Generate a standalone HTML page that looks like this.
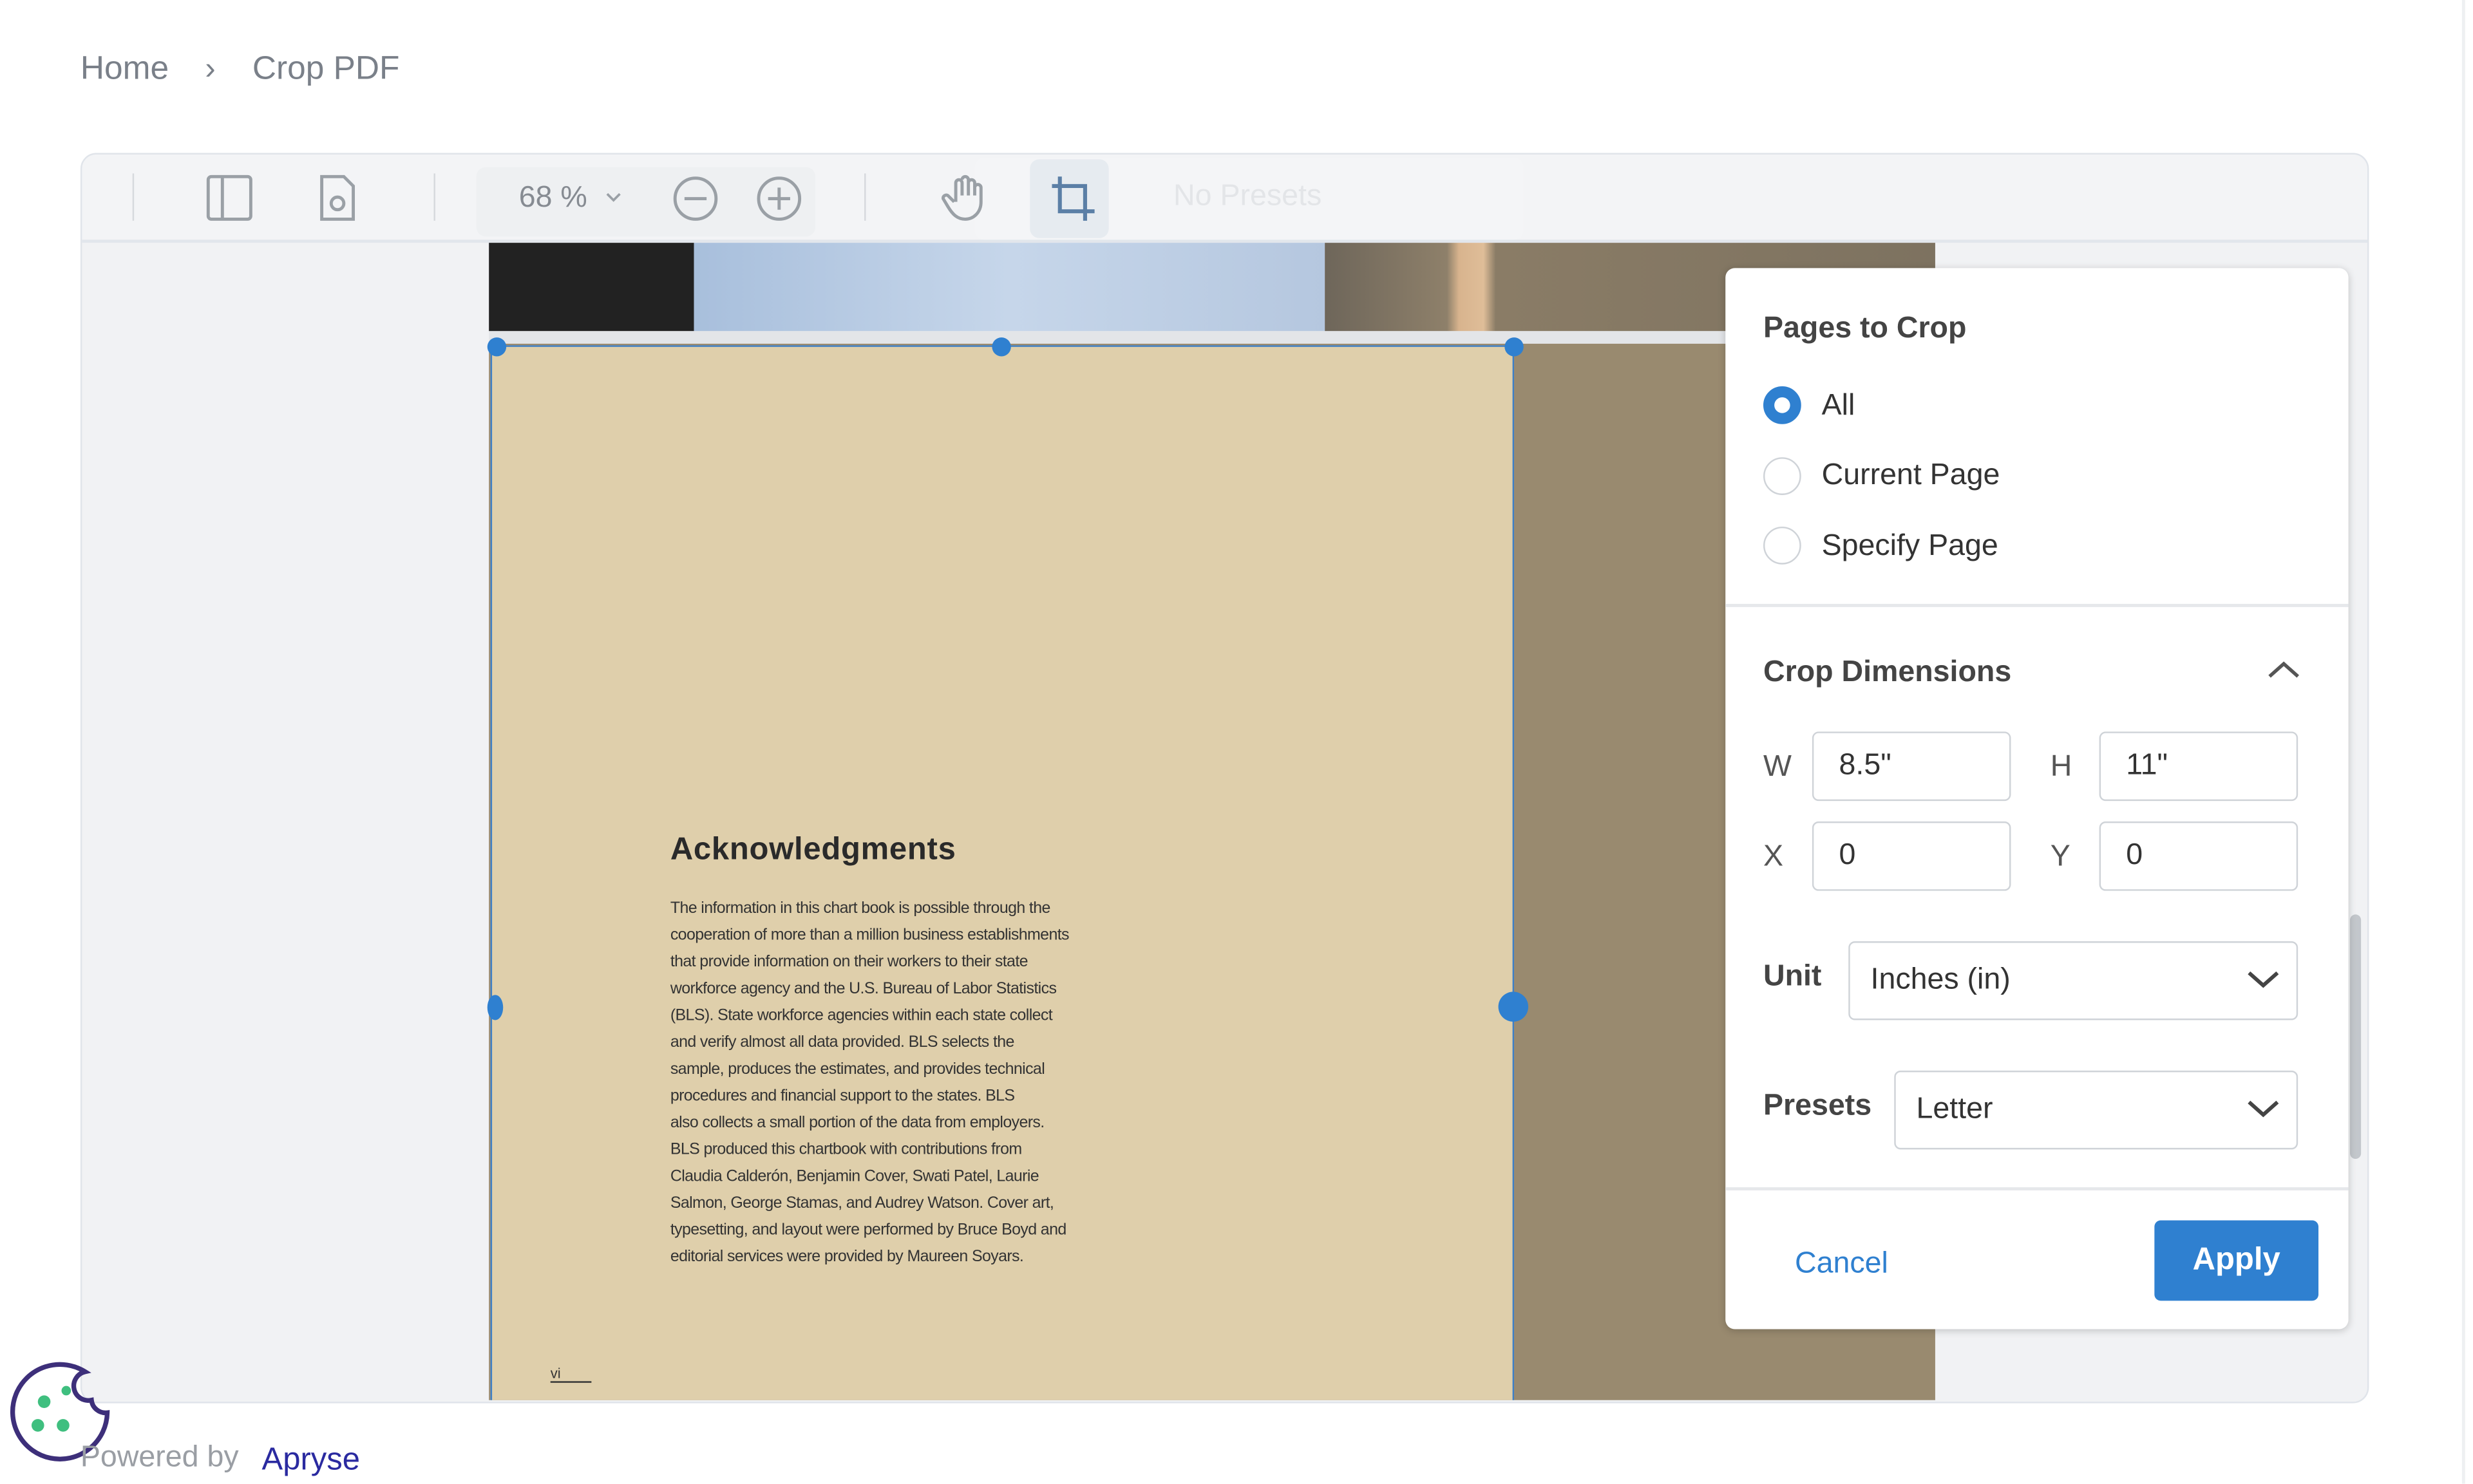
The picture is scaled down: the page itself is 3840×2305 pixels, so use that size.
<!DOCTYPE html>
<html><head><meta charset="utf-8"><style>
*{box-sizing:border-box;margin:0;padding:0}
body{width:3840px;height:2303px;overflow:hidden;background:#fff;font-family:"Liberation Sans",sans-serif}
#w{position:absolute;left:0;top:0;width:1568px;height:941px;transform:scale(2.449);transform-origin:0 0}
.a{position:absolute}
.t{color:#333;font-size:19px}
.inp{position:absolute;border:1px solid #cfd3d8;border-radius:4px;background:#fff;font-size:19px;color:#333;padding-left:16px;display:flex;align-items:center}
.rad{position:absolute;width:24px;height:24px;border-radius:50%;border:1.5px solid #cfd3d8;background:#fff}
.pl{position:absolute;left:425px;font-size:10.2px;letter-spacing:-0.25px;color:#333;font-family:"Liberation Sans Narrow","Liberation Sans",sans-serif;white-space:nowrap}
.h{position:absolute;width:12px;height:12px;border-radius:50%;background:#2f80d0}
</style></head><body><div id="w">
<div class="a" style="left:51px;top:32px;font-size:21px;color:#7a8089">Home</div>
<div class="a" style="left:130px;top:33px;font-size:20px;color:#7a8089">›</div>
<div class="a" style="left:160px;top:32px;font-size:21px;color:#7a8089">Crop PDF</div>

<div class="a" style="left:51px;top:97px;width:1451px;height:793px;border:1px solid #e0e4ea;border-radius:10px;background:#f1f2f4;overflow:hidden">
 <div class="a" style="left:0;top:0;width:1451px;height:56px;background:#f3f4f6;border-bottom:2px solid #e2e6ec"></div>
 <div class="a" style="left:32px;top:12px;width:1px;height:30px;background:#d6d9dd"></div>
 <div class="a" style="left:223px;top:12px;width:1px;height:30px;background:#d6d9dd"></div>
 <div class="a" style="left:496px;top:12px;width:1px;height:30px;background:#d6d9dd"></div>
 <div class="a" style="left:250px;top:8px;width:215px;height:44px;background:#eef0f2;border-radius:6px"></div>
 <div class="a" style="left:566px;top:2px;width:348px;height:52px;background:#f4f5f7;border-radius:6px"></div>
 <div class="a" style="left:601px;top:3px;width:50px;height:50px;background:#e6ebf0;border-radius:6px"></div>
 <svg class="a" style="left:70px;top:0" width="600" height="56" fill="none" stroke="#9aa0a6" stroke-width="2">
  <rect x="10" y="14" width="27" height="27" rx="2"/><line x1="19" y1="14" x2="19" y2="41"/>
  <path d="M82 14h14l6 6v21h-20z"/><circle cx="92" cy="31" r="4"/>
  <path d="M271 25l-4 4l-4-4" stroke-width="1.5"/>
  <circle cx="319" cy="28" r="13"/><line x1="312" y1="28" x2="326" y2="28"/>
  <circle cx="372" cy="28" r="13"/><line x1="365" y1="28" x2="379" y2="28"/><line x1="372" y1="21" x2="372" y2="35"/>
  <path d="M484 30v-12a2 2 0 0 1 4 0v8m0-10a2 2 0 0 1 4 0v10m0-8a2 2 0 0 1 4 0v8m0-5a2 2 0 0 1 4 0v9c0 7-5 11-10 11s-8-3-11-8l-3-5a2 2 0 0 1 3-2l4 4"/>
  <path d="M550 14v22h22M545 20h21v22" stroke="#5b7fa6" stroke-width="2.5"/>
 </svg>
 <div class="a" style="left:277px;top:17px;font-size:19px;color:#868b92">68 %</div>
 <div class="a" style="left:692px;top:16px;font-size:19px;color:#e3e5e8">No Presets</div>
</div>

<!-- page -->
<div class="a" style="left:310px;top:154px;width:130px;height:56px;background:#222"></div>
<div class="a" style="left:440px;top:154px;width:400px;height:56px;background:linear-gradient(90deg,#a8bfdc,#c6d6ea 50%,#b5c7df)"></div>
<div class="a" style="left:840px;top:154px;width:387px;height:56px;background:linear-gradient(90deg,#6e665a,#8e806a 20%,#d8b48e 22%,#dfbd98 26%,#8a7c66 28%,#7d7260)"></div>
<div class="a" style="left:310px;top:210px;width:917px;height:8px;background:#e3e5e8"></div>
<div class="a" style="left:310px;top:218px;width:917px;height:670px;background:#998a6f"></div>
<div class="a" style="left:311px;top:219px;width:649px;height:669px;background:#dfcfab;border:1.5px solid #3f7fc5;border-bottom:none"></div>
<div class="h" style="left:309px;top:214px"></div><div class="h" style="left:629px;top:214px"></div><div class="h" style="left:954px;top:214px"></div>
<div class="h" style="left:309px;top:631px;width:10px;height:16px"></div><div class="h" style="left:950px;top:629px;width:19px;height:19px"></div>
<div class="a" style="left:425px;top:528px;font-size:20px;font-weight:bold;color:#2a2a2a;letter-spacing:0.3px">Acknowledgments</div>
<div class="pl" style="top:571px">The information in this chart book is possible through the</div>
<div class="pl" style="top:588px">cooperation of more than a million business establishments</div>
<div class="pl" style="top:605px">that provide information on their workers to their state</div>
<div class="pl" style="top:622px">workforce agency and the U.S. Bureau of Labor Statistics</div>
<div class="pl" style="top:639px">(BLS). State workforce agencies within each state collect</div>
<div class="pl" style="top:656px">and verify almost all data provided. BLS selects the</div>
<div class="pl" style="top:673px">sample, produces the estimates, and provides technical</div>
<div class="pl" style="top:690px">procedures and financial support to the states. BLS</div>
<div class="pl" style="top:707px">also collects a small portion of the data from employers.</div>
<div class="pl" style="top:724px">BLS produced this chartbook with contributions from</div>
<div class="pl" style="top:741px">Claudia Calderón, Benjamin Cover, Swati Patel, Laurie</div>
<div class="pl" style="top:758px">Salmon, George Stamas, and Audrey Watson. Cover art,</div>
<div class="pl" style="top:775px">typesetting, and layout were performed by Bruce Boyd and</div>
<div class="pl" style="top:792px">editorial services were provided by Maureen Soyars.</div>
<div class="a" style="left:349px;top:866px;font-size:9px;color:#333;border-bottom:1px solid #333;width:26px">vi</div>
<div class="a" style="left:1490px;top:580px;width:7px;height:155px;background:#c3c7cc;border-radius:4px"></div>

<!-- panel -->
<div class="a" style="left:1094px;top:170px;width:395px;height:673px;background:#fff;border-radius:6px;box-shadow:0 1px 5px rgba(0,0,0,.2)">
 <div class="a t" style="left:24px;top:28px;font-weight:bold;color:#444">Pages to Crop</div>
 <div class="rad" style="left:24px;top:75px;border:7px solid #2f80d0"></div>
 <div class="a t" style="left:61px;top:77px">All</div>
 <div class="rad" style="left:24px;top:120px"></div>
 <div class="a t" style="left:61px;top:121px">Current Page</div>
 <div class="rad" style="left:24px;top:164px"></div>
 <div class="a t" style="left:61px;top:166px">Specify Page</div>
 <div class="a" style="left:0;top:213px;width:395px;height:2px;background:#e6e8eb"></div>
 <div class="a t" style="left:24px;top:246px;font-weight:bold;color:#444">Crop Dimensions</div>
 <svg class="a" style="left:343px;top:248px" width="22" height="14" fill="none" stroke="#555" stroke-width="2.2"><path d="M2 11l9-8l9 8"/></svg>
 <div class="a t" style="left:24px;top:306px;color:#555">W</div>
 <div class="inp" style="left:55px;top:294px;width:126px;height:44px">8.5"</div>
 <div class="a t" style="left:206px;top:306px;color:#555">H</div>
 <div class="inp" style="left:237px;top:294px;width:126px;height:44px">11"</div>
 <div class="a t" style="left:24px;top:363px;color:#555">X</div>
 <div class="inp" style="left:55px;top:351px;width:126px;height:44px">0</div>
 <div class="a t" style="left:206px;top:363px;color:#555">Y</div>
 <div class="inp" style="left:237px;top:351px;width:126px;height:44px">0</div>
 <div class="a t" style="left:24px;top:439px;font-weight:bold;color:#444">Unit</div>
 <div class="inp" style="left:78px;top:427px;width:285px;height:50px;padding-left:13px">Inches (in)</div>
 <div class="a t" style="left:24px;top:521px;font-weight:bold;color:#444">Presets</div>
 <div class="inp" style="left:107px;top:509px;width:256px;height:50px;padding-left:13px">Letter</div>
 <svg class="a" style="left:330px;top:445px" width="22" height="100" fill="none" stroke="#444" stroke-width="2.4"><path d="M2 2l9 8l9-8M2 84l9 8l9-8"/></svg>
 <div class="a" style="left:0;top:583px;width:395px;height:2px;background:#e6e8eb"></div>
 <div class="a t" style="left:44px;top:621px;color:#2f80d0">Cancel</div>
 <div class="a" style="left:272px;top:604px;width:104px;height:51px;background:#2f80d0;border-radius:4px;color:#fff;font-size:20px;font-weight:bold;display:flex;align-items:center;justify-content:center">Apply</div>
</div>

<div class="a" style="left:1561px;top:0;width:2px;height:941px;background:#eef0f2"></div>
<svg class="a" style="left:4px;top:860px" width="70" height="70"><path d="M50 10a30 30 0 1 0 14 26a9 9 0 0 1-10-8a9 9 0 0 1-4-18z" fill="#fff" stroke="#3d2f7a" stroke-width="3"/><circle cx="24" cy="29" r="4" fill="#3fbf7f"/><circle cx="20" cy="44" r="4" fill="#3fbf7f"/><circle cx="36" cy="44" r="4" fill="#3fbf7f"/><circle cx="38" cy="22" r="3" fill="#3fbf7f"/></svg>
<div class="a" style="left:51px;top:914px;font-size:19px;color:#9a9ea4">Powered by</div>
<div class="a" style="left:166px;top:915px;font-size:20px;color:#2a2aa0">Apryse</div>
</div></body></html>
